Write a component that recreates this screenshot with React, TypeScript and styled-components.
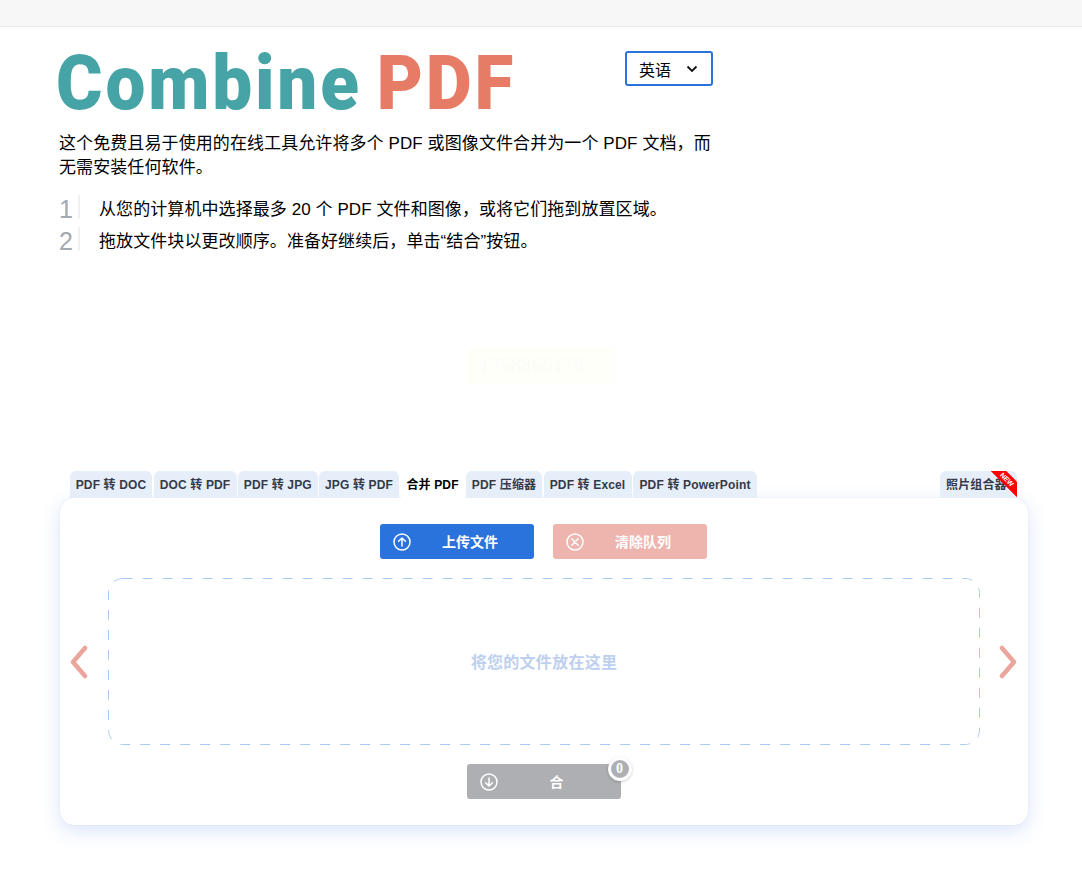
import React from 'react';
import styled, { createGlobalStyle } from 'styled-components';

const GlobalStyle = createGlobalStyle`
  html, body { margin: 0; padding: 0; background: #fff; }
  body { font-family: "Liberation Sans", "Noto Sans CJK SC", sans-serif; color: #000; }
  * { box-sizing: border-box; }
`;

const TopBar = styled.div`
  height: 27px;
  background: #f7f7f7;
  border-bottom: 1px solid #e9e9e9;
`;

const Intro = styled.section`
  width: 713px;
  padding-left: 59px;
`;

const HeadRow = styled.div`
  display: flex;
  justify-content: space-between;
  align-items: flex-start;
  height: 105px;
  padding-top: 24px;
`;

const Logo = styled.h1`
  width: 460px;
  height: 60px;
  margin: -14px 0 0 -3px;
  font-family: "Roboto", "Liberation Sans", sans-serif;
  font-size: 76px;
  line-height: 92px;
  font-weight: 900;
  letter-spacing: 3px;
  word-spacing: -6px;
  white-space: nowrap;
  transform: scaleX(0.935);
  transform-origin: left top;
`;

const LogoPart = styled.span<{ $color: string }>`
  color: ${(p) => p.$color};
`;

const LangSelect = styled.div`
  width: 88px;
  height: 35px;
  display: flex;
  align-items: center;
  justify-content: space-between;
  padding: 0 13px 0 12px;
  border: 2px solid #2b73dc;
  border-radius: 3px;
  font-size: 16px;
`;

const Lead = styled.p`
  margin: 0;
  font-size: 17px;
  line-height: 24px;
  letter-spacing: 0.09px;
`;

const Steps = styled.ol`
  list-style: none;
  margin: 15px 0 0;
  padding: 0;
`;

const Step = styled.li`
  display: flex;
  align-items: center;
  height: 24px;
  margin-bottom: 8px;
  font-size: 17px;
  letter-spacing: 0.08px;
`;

const StepNumber = styled.span`
  width: 21px;
  height: 24px;
  margin-right: 19px;
  border-right: 2px solid #f0f0f0;
  color: #a4a8b0;
  font-size: 25px;
  line-height: 29px;
`;

const Stamp = styled.div`
  width: 148px;
  height: 37px;
  margin: 96px 0 0 467px;
  padding-left: 12px;
  background: #fffffa;
  color: #fcfcf6;
  font-family: "Liberation Serif", serif;
  font-size: 21px;
  line-height: 37px;
`;

const Tool = styled.section`
  width: 968px;
  margin: 87px 0 0 60px;
  padding-bottom: 47px;
`;

const Tabs = styled.nav`
  display: flex;
  gap: 1.5px;
  height: 27px;
  padding-left: 10px;
`;

const Tab = styled.div<{ $active?: boolean; $width: number; $pushRight?: boolean }>`
  position: relative;
  width: ${(p) => p.$width}px;
  margin-left: ${(p) => (p.$pushRight ? 'auto' : '0')};
  margin-right: ${(p) => (p.$pushRight ? '11px' : '0')};
  height: 27px;
  display: flex;
  align-items: center;
  justify-content: ${(p) => (p.$pushRight ? 'flex-start' : 'center')};
  padding: ${(p) => (p.$pushRight ? '0 0 2px 6px' : '0 0 2px')};
  background: ${(p) => (p.$active ? '#fff' : '#e6eef9')};
  color: ${(p) => (p.$active ? '#000' : '#343a4a')};
  border-radius: 6px 6px 0 0;
  font-size: 12px;
  font-weight: 700;
  letter-spacing: 0.15px;
  white-space: nowrap;
  overflow: hidden;
`;

const Ribbon = styled.span`
  position: absolute;
  top: 3px;
  right: -12px;
  width: 44px;
  height: 11px;
  background: #ff0000;
  color: #fff;
  font-size: 7px;
  line-height: 11px;
  text-align: center;
  letter-spacing: 0;
  transform: rotate(45deg);
`;

const Card = styled.div`
  height: 327px;
  padding-top: 26px;
  background: #fff;
  border-radius: 14px;
  box-shadow: 0 0 1px rgba(70, 120, 220, 0.25), 0 6px 20px rgba(70, 125, 225, 0.2);
`;

const ButtonRow = styled.div`
  display: flex;
  justify-content: center;
  gap: 19px;
  margin-left: -1px;
`;

const ActionButton = styled.div<{ $color: string }>`
  position: relative;
  width: 154px;
  height: 35px;
  display: flex;
  align-items: center;
  padding-left: 13px;
  background: ${(p) => p.$color};
  border-radius: 3px;
  color: #fff;
  font-size: 14px;
  font-weight: 700;
`;

const ButtonLabel = styled.span`
  flex: 1;
  padding: 0 5px 2px 0;
  text-align: center;
`;

const DropRow = styled.div`
  display: grid;
  grid-template-columns: 48px 872px 48px;
  align-items: center;
  margin-top: 19px;
`;

const DropZone = styled.div`
  height: 167px;
  display: flex;
  align-items: center;
  justify-content: center;
  padding-bottom: 2px;
  border-radius: 14px;
  background-image: url("data:image/svg+xml,%3Csvg xmlns='http://www.w3.org/2000/svg' width='100%25' height='100%25'%3E%3Crect x='.5' y='.5' width='871' height='166' rx='14' fill='none' stroke='%23a9caf2' stroke-dasharray='10 10'/%3E%3C/svg%3E");
  color: #bdd0f0;
  font-size: 16px;
  font-weight: 700;
  letter-spacing: 0.3px;
`;

const Arrow = styled.svg<{ $flip?: boolean }>`
  display: block;
  width: 20px;
  height: 36px;
  margin-left: ${(p) => (p.$flip ? '18px' : '9px')};
  filter: blur(0.5px);
`;

const MergeRow = styled.div`
  display: flex;
  justify-content: center;
  margin-top: 19px;
  margin-left: -1px;
`;

const Badge = styled.span`
  position: absolute;
  top: -7px;
  right: -11px;
  width: 24px;
  height: 24px;
  display: flex;
  align-items: center;
  justify-content: center;
  border: 3px solid #fff;
  border-radius: 50%;
  background: #adafb3;
  box-shadow: 0 1px 3px rgba(0, 0, 0, 0.2);
  color: #fff;
  font-family: "Liberation Serif", serif;
  font-size: 14px;
`;

const CircleIcon = ({ kind }: { kind: 'up' | 'down' | 'x' }) => (
  <svg width="18" height="18" viewBox="0 0 18 18" fill="none" stroke="#fff" strokeWidth="1.5" strokeLinecap="round" strokeLinejoin="round">
    <circle cx="9" cy="9" r="8" />
    {kind === 'up' && <path d="M9 13V5M5.6 8.3 9 5l3.4 3.3" />}
    {kind === 'down' && <path d="M9 5v8M5.6 9.7 9 13l3.4-3.3" />}
    {kind === 'x' && <path d="M5.8 5.8l6.4 6.4M12.2 5.8l-6.4 6.4" />}
  </svg>
);

const tabs = [
  { label: 'PDF 转 DOC', width: 82 },
  { label: 'DOC 转 PDF', width: 83 },
  { label: 'PDF 转 JPG', width: 79.5 },
  { label: 'JPG 转 PDF', width: 80 },
  { label: '合并 PDF', width: 64, active: true },
  { label: 'PDF 压缩器', width: 76 },
  { label: 'PDF 转 Excel', width: 88 },
  { label: 'PDF 转 PowerPoint', width: 124 },
];

export default function App() {
  return (
    <>
      <GlobalStyle />
      <TopBar />
      <Intro>
        <HeadRow>
          <Logo>
            <LogoPart $color="#47a4a6">Combine</LogoPart> <LogoPart $color="#e67c66">PDF</LogoPart>
          </Logo>
          <LangSelect>
            英语
            <svg width="12" height="8" viewBox="0 0 12 8" fill="none" stroke="#111" strokeWidth="1.8">
              <path d="M1.5 1.5 6 6l4.5-4.5" />
            </svg>
          </LangSelect>
        </HeadRow>
        <Lead>这个免费且易于使用的在线工具允许将多个 PDF 或图像文件合并为一个 PDF 文档，而无需安装任何软件。</Lead>
        <Steps>
          <Step>
            <StepNumber>1</StepNumber>从您的计算机中选择最多 20 个 PDF 文件和图像，或将它们拖到放置区域。
          </Step>
          <Step>
            <StepNumber>2</StepNumber>拖放文件块以更改顺序。准备好继续后，单击“结合”按钮。
          </Step>
        </Steps>
      </Intro>
      <Stamp>1758866178</Stamp>
      <Tool>
        <Tabs>
          {tabs.map((t) => (
            <Tab key={t.label} $width={t.width} $active={t.active}>
              {t.label}
            </Tab>
          ))}
          <Tab $width={77} $pushRight>
            照片组合器
            <Ribbon>NEW</Ribbon>
          </Tab>
        </Tabs>
        <Card>
          <ButtonRow>
            <ActionButton $color="#2b73dc">
              <CircleIcon kind="up" />
              <ButtonLabel>上传文件</ButtonLabel>
            </ActionButton>
            <ActionButton $color="#eeb5ae">
              <CircleIcon kind="x" />
              <ButtonLabel>清除队列</ButtonLabel>
            </ActionButton>
          </ButtonRow>
          <DropRow>
            <Arrow viewBox="0 0 20 36" fill="none" stroke="#eca59c" strokeWidth="4.5" strokeLinecap="round" strokeLinejoin="round">
              <path d="M16 4 4 18l12 14" />
            </Arrow>
            <DropZone>将您的文件放在这里</DropZone>
            <Arrow $flip viewBox="0 0 20 36" fill="none" stroke="#eca59c" strokeWidth="4.5" strokeLinecap="round" strokeLinejoin="round">
              <path d="M4 4l12 14L4 32" />
            </Arrow>
          </DropRow>
          <MergeRow>
            <ActionButton $color="#adafb3">
              <CircleIcon kind="down" />
              <ButtonLabel>合</ButtonLabel>
              <Badge>0</Badge>
            </ActionButton>
          </MergeRow>
        </Card>
      </Tool>
    </>
  );
}
